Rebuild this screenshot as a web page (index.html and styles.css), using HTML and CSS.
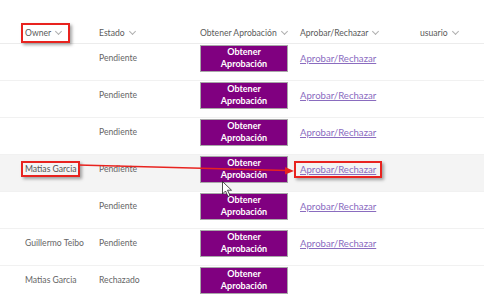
FILE: index.html
```html
<html>

<head>
  <link rel="stylesheet" href="styles.css">
</head>

<body>
  <div class="list">
    <div class="row head">
      <div class="cell owner"><span class="mark mark-head">Owner <i class="chev"></i></span></div>
      <div class="cell estado">Estado <i class="chev"></i></div>
      <div class="cell obtener">Obtener Aprobación <i class="chev"></i></div>
      <div class="cell aprobar">Aprobar/Rechazar <i class="chev"></i></div>
      <div class="cell usuario">usuario <i class="chev"></i></div>
    </div>

    <div class="row">
      <div class="cell owner"></div>
      <div class="cell estado">Pendiente</div>
      <div class="cell obtener"><button class="btn">Obtener<br>Aprobación</button></div>
      <div class="cell aprobar"><a class="link" href="#">Aprobar/Rechazar</a></div>
      <div class="cell usuario"></div>
    </div>
    <div class="row">
      <div class="cell owner"></div>
      <div class="cell estado">Pendiente</div>
      <div class="cell obtener"><button class="btn">Obtener<br>Aprobación</button></div>
      <div class="cell aprobar"><a class="link" href="#">Aprobar/Rechazar</a></div>
      <div class="cell usuario"></div>
    </div>
    <div class="row">
      <div class="cell owner"></div>
      <div class="cell estado">Pendiente</div>
      <div class="cell obtener"><button class="btn">Obtener<br>Aprobación</button></div>
      <div class="cell aprobar"><a class="link" href="#">Aprobar/Rechazar</a></div>
      <div class="cell usuario"></div>
    </div>
    <div class="row hover">
      <div class="cell owner"><span class="mark mark-name">Matias Garcia</span></div>
      <div class="cell estado">Pendiente</div>
      <div class="cell obtener"><button class="btn">Obtener<br>Aprobación</button></div>
      <div class="cell aprobar"><a class="link mark mark-link" href="#">Aprobar/Rechazar</a></div>
      <div class="cell usuario"></div>
    </div>
    <div class="row">
      <div class="cell owner"></div>
      <div class="cell estado">Pendiente</div>
      <div class="cell obtener"><button class="btn">Obtener<br>Aprobación</button></div>
      <div class="cell aprobar"><a class="link" href="#">Aprobar/Rechazar</a></div>
      <div class="cell usuario"></div>
    </div>
    <div class="row">
      <div class="cell owner">Guillermo Teibo</div>
      <div class="cell estado">Pendiente</div>
      <div class="cell obtener"><button class="btn">Obtener<br>Aprobación</button></div>
      <div class="cell aprobar"><a class="link" href="#">Aprobar/Rechazar</a></div>
      <div class="cell usuario"></div>
    </div>
    <div class="row">
      <div class="cell owner">Matias Garcia</div>
      <div class="cell estado">Rechazado</div>
      <div class="cell obtener"><button class="btn">Obtener<br>Aprobación</button></div>
      <div class="cell aprobar"></div>
      <div class="cell usuario"></div>
    </div>
  </div>

  <!-- annotation arrow + mouse pointer drawn on top of the list -->
  <svg class="overlay" width="484" height="301" viewBox="0 0 484 301">
    <line x1="78" y1="165" x2="287" y2="170.5" stroke="#e8231f" stroke-width="1.5" />
    <polygon points="294,171 285,167 285,174.5" fill="#e8231f" />
    <path d="M222.5 181.5 L222.5 194 L225.5 191 L228 196.5 L230 195.5 L227.5 190.2 L231.5 190.2 Z" fill="#fff" stroke="#222" stroke-width="0.8" stroke-linejoin="round" />
  </svg>
</body>

</html>
```

FILE: styles.css
```css
body {
  margin: 0;
  background: #ffffff;
  font-family: Lato, sans-serif;
  font-size: 8.6px;
  color: #666666;
  position: relative;
  width: 484px;
  height: 301px;
  overflow: hidden;
}

.list {
  padding-top: 22px;
}

.row {
  display: flex;
  align-items: center;
  height: 37px;
  padding-bottom: 8px;
  box-sizing: border-box;
  border-bottom: 1px solid #f1f1f1;
}

.row.head {
  height: 22px;
  padding-bottom: 0;
  color: #5a5a5a;
  border-bottom: 1px solid #ececec;
}

.row.hover {
  background: #f4f4f4;
}

.cell {
  box-sizing: border-box;
  white-space: nowrap;
}

.owner { width: 99px; padding-left: 25px; }
.estado { width: 101px; }
.obtener { width: 100px; }
.aprobar { width: 120px; }
.usuario { flex: 1; }

.chev {
  display: inline-block;
  width: 4px;
  height: 4px;
  border-right: 1px solid #b0b0b0;
  border-bottom: 1px solid #b0b0b0;
  transform: rotate(45deg);
  margin: 0 0 3px 3px;
  vertical-align: middle;
}

.btn {
  display: block;
  width: 88px;
  height: 27px;
  padding: 0;
  background: #800080;
  border: 1px solid #a8a8a8;
  color: #ffffff;
  font-family: Lato, sans-serif;
  font-size: 9px;
  font-weight: 700;
  line-height: 12px;
  text-align: center;
}

.link {
  color: #8a6cbf;
  font-size: 9.6px;
  text-decoration: underline;
}

.mark {
  display: inline-block;
  border: 2px solid #e8231f;
  box-shadow: 2px 2px 3px rgba(0, 0, 0, 0.35);
}

.mark-head {
  margin-left: -4px;
  padding: 3px 7px 3px 2px;
}

.mark-name {
  margin-left: -4px;
  padding: 1px 2px;
  line-height: 10px;
  color: #555555;
}

.mark-link {
  margin-left: -6px;
  padding: 1px 4px;
  line-height: 11px;
}

.overlay {
  position: absolute;
  left: 0;
  top: 0;
}
```
